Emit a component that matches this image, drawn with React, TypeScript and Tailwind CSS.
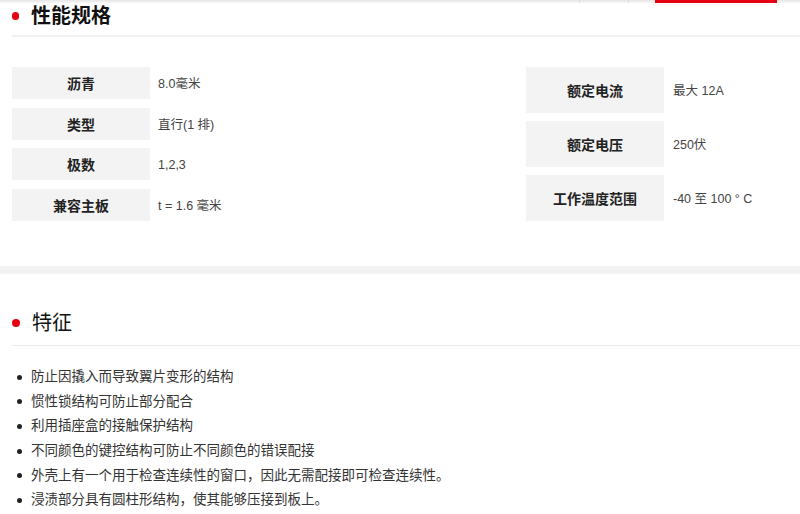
import React from "react";

const left = [
  ["沥青", "8.0毫米"],
  ["类型", "直行(1 排)"],
  ["极数", "1,2,3"],
  ["兼容主板", "t = 1.6 毫米"],
];
const right = [
  ["额定电流", "最大 12A"],
  ["额定电压", "250伏"],
  ["工作温度范围", "-40 至 100 ° C"],
];
const features = [
  "防止因撬入而导致翼片变形的结构",
  "惯性锁结构可防止部分配合",
  "利用插座盒的接触保护结构",
  "不同颜色的键控结构可防止不同颜色的错误配接",
  "外壳上有一个用于检查连续性的窗口，因此无需配接即可检查连续性。",
  "浸渍部分具有圆柱形结构，使其能够压接到板上。",
];

export default function App() {
  return (
    <div
      className="w-[800px] h-[514px] overflow-hidden bg-white text-[#333]"
      style={{ fontFamily: '"Liberation Sans", "Noto Sans CJK SC", sans-serif' }}
    >
      {/* top strip */}
      <div className="relative h-[3px] bg-gradient-to-b from-[#e6e6e6] to-[#f8f8f8]">
        <div className="absolute left-[579px] top-0 h-[3px] w-px bg-[#dcdcdc]" />
        <div className="absolute left-[628px] top-0 h-[3px] w-px bg-[#dcdcdc]" />
        <div className="absolute left-[655px] top-0 h-[3px] w-[122px] bg-[#e60012]" />
      </div>

      {/* heading 1 */}
      <div className="pl-[12px]">
        <div className="flex h-[26px] items-center gap-[12px]">
          <span className="h-[8px] w-[7px] rounded-full bg-[#e60012]" />
          <span className="text-[20px] font-bold leading-none text-[#111]">性能规格</span>
        </div>
        <div className="mt-[6px] h-[2px] bg-[#f1f1f1]" />
      </div>

      {/* spec tables */}
      <div className="mt-[30px] flex pl-[12px]">
        <div className="flex w-[514px] flex-col gap-[8.5px]">
          {left.map(([k, v]) => (
            <div key={k} className="flex h-[32px] items-center">
              <div className="flex h-full w-[138px] items-center justify-center bg-[#f3f3f3] pt-[3px] text-[14px] font-bold text-[#222]">
                {k}
              </div>
              <div className="pl-[8px] pt-[3px] text-[12.5px] text-[#444]">{v}</div>
            </div>
          ))}
        </div>
        <div className="flex flex-col gap-[8px]">
          {right.map(([k, v]) => (
            <div key={k} className="flex h-[46px] items-center">
              <div className="flex h-full w-[138px] items-center justify-center bg-[#f3f3f3] pt-[3px] text-[14px] font-bold text-[#222]">
                {k}
              </div>
              <div className="pl-[9px] pt-[3px] text-[12.5px] text-[#444]">{v}</div>
            </div>
          ))}
        </div>
      </div>

      {/* gray band */}
      <div className="mt-[45px] h-[8px] bg-[#f2f2f2]" />

      {/* heading 2 */}
      <div className="mt-[36px] pl-[12px]">
        <div className="flex h-[26px] items-center gap-[12px]">
          <span className="h-[8px] w-[8px] rounded-full bg-[#e60012]" />
          <span className="text-[20px] leading-none text-[#111]">特征</span>
        </div>
        <div className="mt-[9px] h-px bg-[#e9e9e9]" />
      </div>

      {/* features list */}
      <ul className="mt-[19px] pl-[17px]">
        {features.map((f) => (
          <li key={f} className="flex h-[24.6px] items-center text-[13.5px] text-[#333]">
            <span className="mr-[9px] h-[5px] w-[5px] rounded-full bg-[#222]" />
            {f}
          </li>
        ))}
      </ul>
    </div>
  );
}
